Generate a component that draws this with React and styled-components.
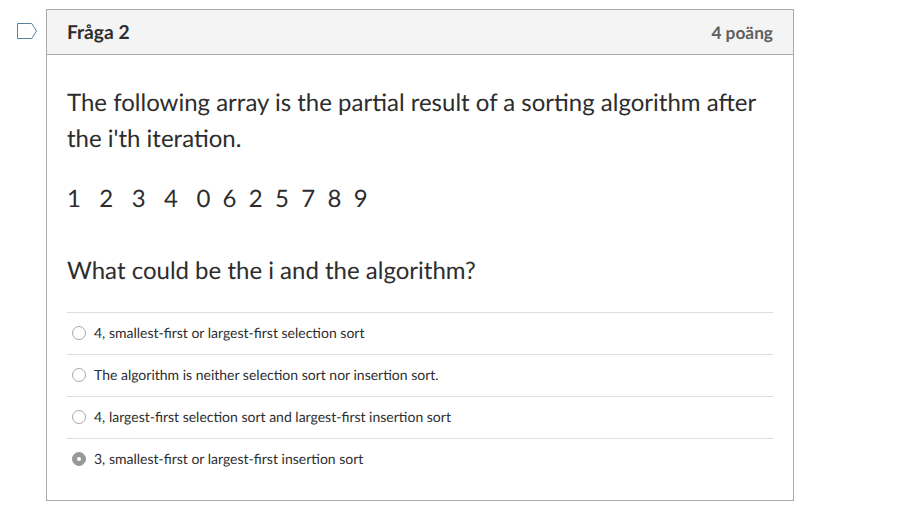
import React from "react";
import styled, { createGlobalStyle } from "styled-components";

const GlobalStyle = createGlobalStyle`
  * { box-sizing: border-box; }
  body {
    margin: 0;
    background: #fff;
    color: #2d2d2d;
    font-family: Lato, sans-serif;
    text-rendering: geometricPrecision;
  }
`;
const Page = styled.main`
  display: flex;
  align-items: flex-start;
  padding: 9px 0 0 16px;
`;
const Flag = styled.svg`
  flex: none;
  width: 22px;
  height: 18px;
  margin: 13px 8px 0 0;
`;
const Card = styled.section`
  width: 748px;
  height: 492px;
  border: 1px solid #aaa;
`;
const Header = styled.header`
  display: flex;
  justify-content: space-between;
  align-items: center;
  height: 45px;
  padding: 0 20px;
  background: #f4f4f4;
  border-bottom: 1px solid #aaa;
`;
const Title = styled.h1`
  margin: 0;
  font-size: 19.2px;
  font-weight: 700;
`;
const Points = styled.span`
  font-size: 17.3px;
  font-weight: 700;
  color: #5f5f5f;
`;
const Body = styled.div`
  padding: 30px 20px 0;
`;
const Text = styled.p`
  margin: 0 0 24px;
  font-size: 24px;
  line-height: 36px;
  white-space: pre-wrap;
`;
const Sequence = styled(Text)`
  margin-bottom: 36px;
`;
const Question = styled(Text)`
  margin-bottom: 23px;
`;
const Answers = styled.div`
  display: flex;
  flex-direction: column;
`;
const Answer = styled.label`
  display: flex;
  align-items: center;
  height: 42px;
  padding: 0 0 1px 5px;
  border-top: 1px solid #ddd;
  font-size: 14px;
`;
const AnswerText = styled.span`
  padding-bottom: 2px;
`;
const Radio = styled.span`
  display: flex;
  align-items: center;
  justify-content: center;
  width: 14px;
  height: 14px;
  margin-right: 8px;
  border: 1px solid ${(p) => (p.$checked ? "#98989b" : "#a8a8a8")};
  border-radius: 50%;
  background: ${(p) => (p.$checked ? "#98989b" : "#fff")};
  &::after {
    content: "";
    width: 4px;
    height: 4px;
    border-radius: 50%;
    background: #fff;
  }
`;
const answers = [
  "4, smallest-first or largest-first selection sort",
  "The algorithm is neither selection sort nor insertion sort.",
  "4, largest-first selection sort and largest-first insertion sort",
  "3, smallest-first or largest-first insertion sort",
];

export default function App() {
  return (
    <Page>
      <GlobalStyle />
      <Flag viewBox="0 0 22 18">
        <path d="M1.5 1.5H15.7L20.5 9L15.7 16.5H1.5Z" fill="none" stroke="#56829f" />
      </Flag>
      <Card>
        <Header>
          <Title>Fråga 2</Title>
          <Points>4 poäng</Points>
        </Header>
        <Body>
          <Text>The following array is the partial result of a sorting algorithm after the i'th iteration.</Text>
          <Sequence>{"1   2   3   4   0  6  2  5  7  8  9"}</Sequence>
          <Question>What could be the i and the algorithm?</Question>
          <Answers role="radiogroup">
            {answers.map((answer, i) => (
              <Answer key={answer}>
                <Radio role="radio" aria-checked={i === 3} $checked={i === 3} />
                <AnswerText>{answer}</AnswerText>
              </Answer>
            ))}
          </Answers>
        </Body>
      </Card>
    </Page>
  );
}
